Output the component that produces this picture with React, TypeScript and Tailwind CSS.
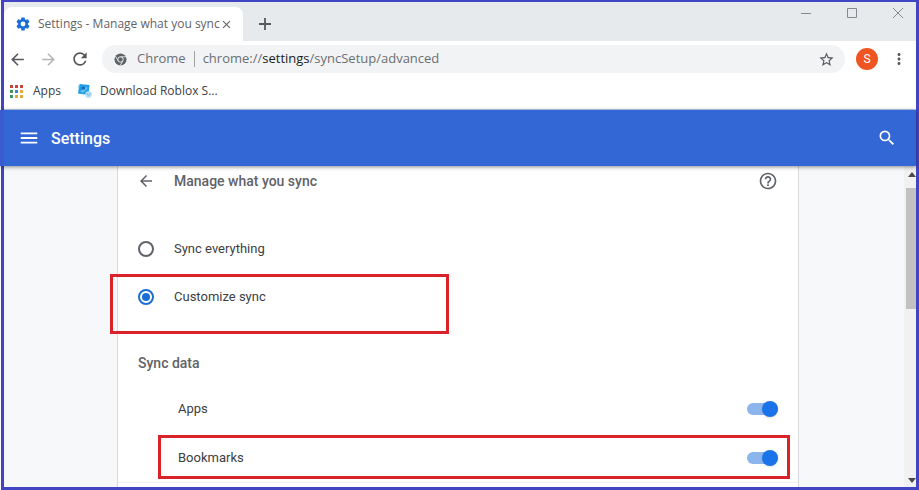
import { useState } from "react";
import {
  MdArrowBack,
  MdArrowForward,
  MdClose,
  MdHelpOutline,
  MdMenu,
  MdMoreVert,
  MdRefresh,
  MdSearch,
  MdStarBorder,
} from "react-icons/md";

const appColors = [
  "fill-[#c5443c]",
  "fill-[#c5443c]",
  "fill-[#c5443c]",
  "fill-[#3f9a5b]",
  "fill-[#3f7fd0]",
  "fill-[#e2a63a]",
  "fill-[#3f9a5b]",
  "fill-[#e2a63a]",
  "fill-[#e2a63a]",
];

function AppsGrid() {
  return (
    <svg viewBox="0 0 13 13" className="size-[13px]">
      {appColors.map((color, i) => (
        <rect
          key={i}
          x={(i % 3) * 5}
          y={Math.floor(i / 3) * 5}
          width="3"
          height="3"
          className={color}
        />
      ))}
    </svg>
  );
}

function RobloxIcon() {
  return (
    <svg viewBox="0 0 16 16" className="size-4">
      <path d="M2.5 1 12.5 2 11.5 12 1 10.5Z" fill="#1f9de6" />
      <path d="M1 3.5 2.5 1 2 7Z" fill="#8fd0f5" />
      <path d="M3 8.5 9.5 3.5 10.5 5.5 6 10Z" fill="#63bff2" />
      <path d="M5 3.8 8.2 4.2 7.8 6.6 4.6 6.2Z" fill="#0d6bb8" />
      <circle cx="11.5" cy="11.5" r="3.3" fill="#b4dcf5" />
      <path d="M9.8 10.5 11.5 12.5 13.5 10.5" stroke="#6cb9e8" fill="none" />
    </svg>
  );
}

const gearTeeth = [0, 60, 120, 180, 240, 300];

function GearIcon() {
  return (
    <svg viewBox="0 0 14 14" className="size-3.5 shrink-0">
      <circle
        cx="7"
        cy="7"
        r="3.7"
        fill="none"
        stroke="#1a6fd6"
        strokeWidth="2.6"
      />
      {gearTeeth.map((angle) => (
        <path
          key={angle}
          d="M5.4 0.4h3.2l.5 2.4H4.9Z"
          transform={`rotate(${angle} 7 7)`}
          fill="#1a6fd6"
        />
      ))}
    </svg>
  );
}

function ChromeIcon() {
  return (
    <svg viewBox="0 0 14 14" className="size-[13px]">
      <circle cx="7" cy="7" r="6.5" fill="#5f6368" />
      <circle cx="7" cy="7" r="2.9" fill="none" stroke="#f1f3f4" />
      <path
        d="M7 4.1h6M4.5 8.4 1.6 3.4M9.5 8.4 6.6 13.4"
        stroke="#f1f3f4"
        strokeWidth="0.9"
      />
    </svg>
  );
}

function TabStrip() {
  return (
    <div className="flex h-[39px] items-end justify-between bg-[#e7eaed]">
      <div className="flex items-center">
        <div className="flex h-[34px] w-[239px] items-center rounded-t-lg bg-white pr-2.5 pl-3">
          <GearIcon />
          <span className="ml-2 flex-1 text-[12px] whitespace-nowrap text-[#5f6368]">
            Settings - Manage what you sync
          </span>
          <button aria-label="Close tab" className="text-[#5f6368]">
            <MdClose className="size-[13px]" />
          </button>
        </div>
        <button aria-label="New tab" className="ml-4 text-[#55585c]">
          <svg viewBox="0 0 12 12" className="size-3">
            <path d="M6 0v12M0 6h12" stroke="currentColor" strokeWidth="1.8" />
          </svg>
        </button>
      </div>
      <div className="flex items-center gap-9 self-start pt-1.5 pr-[13px] text-[#85888c]">
        <button aria-label="Minimize">
          <svg viewBox="0 0 10 10" className="size-2.5">
            <path d="M0 5.5h10" stroke="currentColor" />
          </svg>
        </button>
        <button aria-label="Maximize">
          <svg viewBox="0 0 10 10" className="size-2.5">
            <path d="M.5 .5h9v9h-9z" stroke="currentColor" fill="none" />
          </svg>
        </button>
        <button aria-label="Close window">
          <svg viewBox="0 0 10 10" className="size-2.5">
            <path d="M0 0 10 10M10 0 0 10" stroke="currentColor" />
          </svg>
        </button>
      </div>
    </div>
  );
}

function Toolbar() {
  return (
    <div className="flex h-9 items-center pr-2 pl-1 text-[#55585c]">
      <button aria-label="Back">
        <MdArrowBack className="size-[19px]" />
      </button>
      <button aria-label="Forward" className="ml-3 text-[#b4b6b9]">
        <MdArrowForward className="size-[19px]" />
      </button>
      <button aria-label="Reload" className="ml-3">
        <MdRefresh className="size-5" />
      </button>
      <div className="ml-3 flex h-7 flex-1 items-center rounded-full bg-[#f1f3f4] pr-2.5 pl-3 text-[13px] text-[#6b6f73]">
        <ChromeIcon />
        <span className="ml-2.5">Chrome</span>
        <span className="mx-2 h-4 w-px bg-[#9fa2a5]" />
        <span className="flex-1 whitespace-nowrap">
          chrome://<span className="text-[#202124]">settings</span>
          /syncSetup/advanced
        </span>
        <button aria-label="Bookmark this tab" className="text-[#55585c]">
          <MdStarBorder className="size-[17px]" />
        </button>
      </div>
      <button
        aria-label="Profile"
        className="ml-[11px] flex size-[22px] items-center justify-center rounded-full bg-[#ee5522] font-[Roboto,sans-serif] text-[12px] text-white"
      >
        S
      </button>
      <button aria-label="Menu" className="ml-3">
        <MdMoreVert className="size-[18px]" />
      </button>
    </div>
  );
}

function BookmarksBar() {
  return (
    <div className="flex h-[33px] items-center border-b border-[#b5cdf0] pb-1 pl-1.5 text-[12px] text-[#3c4043]">
      <a href="#apps" className="flex items-center gap-2.5">
        <AppsGrid />
        Apps
      </a>
      <a href="#roblox" className="ml-4 flex items-center gap-[7px]">
        <RobloxIcon />
        Download Roblox S...
      </a>
    </div>
  );
}

type SyncOptionProps = {
  label: string;
  checked: boolean;
  onChange: () => void;
};

function SyncOption({ label, checked, onChange }: SyncOptionProps) {
  return (
    <label className="flex h-12 items-center gap-5">
      <input
        type="radio"
        name="sync"
        checked={checked}
        onChange={onChange}
        className="grid size-4 appearance-none place-content-center rounded-full border-2 border-[#5f6368] before:size-2 before:rounded-full checked:border-[#1a6fd0] checked:before:bg-[#1a6fd0]"
      />
      {label}
    </label>
  );
}

function ToggleRow({ label }: { label: string }) {
  return (
    <label className="flex h-12 items-center justify-between pr-5 pl-[60px]">
      {label}
      <input
        type="checkbox"
        role="switch"
        defaultChecked
        className="flex h-3 w-[31px] appearance-none items-center rounded-full bg-[#bdc1c6] before:size-4 before:shrink-0 before:rounded-full before:bg-white before:shadow checked:justify-end checked:bg-[#8cb5ee] checked:before:bg-[#1a73e8]"
      />
    </label>
  );
}

function SyncCard() {
  const [mode, setMode] = useState("custom");

  return (
    <section className="w-full max-w-[682px] border-x border-[#d9dadc] bg-white text-[13px] text-[#3c4043]">
      <div className="flex h-[30px] items-center pr-5 pl-[19px]">
        <button aria-label="Back" className="text-[#5f6368]">
          <MdArrowBack className="size-[18px]" />
        </button>
        <h2 className="ml-[19px] flex-1 text-[14px] font-medium text-[#5f6368]">
          Manage what you sync
        </h2>
        <button aria-label="Help" className="text-[#5f6368]">
          <MdHelpOutline className="size-5" />
        </button>
      </div>

      <div className="mt-[29px]">
        <div className="px-5">
          <SyncOption
            label="Sync everything"
            checked={mode === "all"}
            onChange={() => setMode("all")}
          />
        </div>
        <div className="relative px-5">
          <SyncOption
            label="Customize sync"
            checked={mode === "custom"}
            onChange={() => setMode("custom")}
          />
          <div className="pointer-events-none absolute top-px -left-2 h-[60px] w-[339px] border-3 border-[#d9222a]" />
        </div>
      </div>

      <h3 className="flex h-16 items-center px-5 pt-5 text-[14px] font-medium text-[#5f6368]">
        Sync data
      </h3>
      <ToggleRow label="Apps" />
      <div className="relative mt-px border-b border-[#f1f1f1]">
        <ToggleRow label="Bookmarks" />
        <div className="pointer-events-none absolute top-px right-2 left-10 h-11 border-3 border-[#d9222a]" />
      </div>
    </section>
  );
}

function Scrollbar() {
  return (
    <div className="flex w-3 shrink-0 flex-col items-end bg-[#f1f1f1] py-1 text-[#4a4a4a]">
      <svg viewBox="0 0 8 5" className="mt-0.5 h-[5px] w-2">
        <path d="M4 0 8 5H0z" fill="currentColor" />
      </svg>
      <div className="mt-[11px] h-[121px] w-2.5 bg-[#c1c1c1]" />
      <div className="flex-1" />
      <svg viewBox="0 0 8 5" className="h-[5px] w-2">
        <path d="M0 0h8L4 5z" fill="currentColor" />
      </svg>
    </div>
  );
}

export default function App() {
  return (
    <div className="h-screen bg-white pl-px font-['Open_Sans','Noto_Sans',sans-serif]">
      <div className="flex h-full flex-col border-t-2 border-r-3 border-b-3 border-l-3 border-[#4145c4]">
        <TabStrip />
        <Toolbar />
        <BookmarksBar />
        <header className="z-10 -ml-1 flex h-14 shrink-0 items-center border-l-4 border-[#3a5bcf] bg-[#3367d6] pr-[19px] pl-3.5 font-[Roboto,sans-serif] text-white shadow-[0_1px_4px_rgba(0,0,0,0.45)]">
          <button aria-label="Main menu">
            <MdMenu className="size-[22px]" />
          </button>
          <h1 className="ml-[11px] flex-1 pt-0.5 text-[16px] font-medium">
            Settings
          </h1>
          <button aria-label="Search settings">
            <MdSearch className="size-5" />
          </button>
        </header>
        <main className="flex min-h-0 flex-1 bg-[#f7f8fa] font-[Roboto,sans-serif]">
          <div className="flex flex-1 justify-center overflow-hidden pl-2">
            <SyncCard />
          </div>
          <Scrollbar />
        </main>
      </div>
    </div>
  );
}
